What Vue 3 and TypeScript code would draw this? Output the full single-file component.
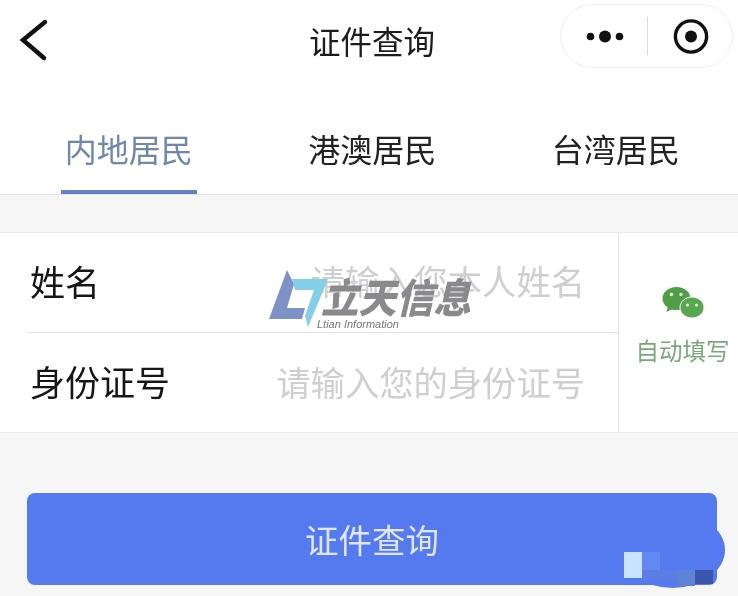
<script setup lang="ts">
const tabs: string[] = ['内地居民', '港澳居民', '台湾居民']
const fields = [
  { label: '姓名', placeholder: '请输入您本人姓名' },
  { label: '身份证号', placeholder: '请输入您的身份证号' },
]
</script>

<template>
  <div class="page">
    <header class="nav">
      <svg class="back" width="50" height="62" viewBox="0 0 50 62">
        <path d="M34 16 L12 34 L33 52" fill="none" stroke="#111" stroke-width="4.4" stroke-linecap="round" stroke-linejoin="miter" />
      </svg>
      <h1 class="title">证件查询</h1>
      <div class="capsule">
        <svg width="60" height="20" viewBox="0 0 60 20">
          <circle cx="9.500" cy="10.500" r="3.800" fill="#111" />
          <circle cx="24" cy="10.500" r="6" fill="#111" />
          <circle cx="38.500" cy="10.500" r="3.800" fill="#111" />
        </svg>
        <span class="capsule-line"></span>
        <svg width="38" height="38" viewBox="0 0 38 38">
          <circle cx="19" cy="19.500" r="15.600" fill="none" stroke="#111" stroke-width="3.400" />
          <circle cx="19" cy="19.500" r="6" fill="#111" />
        </svg>
      </div>
    </header>

    <nav class="tabs">
      <div v-for="(tab, i) in tabs" :key="tab" class="tab">
        <span class="tab-label" :class="{ active: i === 0 }">{{ tab }}</span>
      </div>
    </nav>

    <section class="form">
      <div class="fields">
        <div v-for="f in fields" :key="f.label" class="field">
          <span class="label">{{ f.label }}</span>
          <span class="placeholder">{{ f.placeholder }}</span>
        </div>
      </div>
      <div class="auto">
        <svg width="44" height="36" viewBox="0 0 44 36">
          <path d="M15.500 2 C7.500 2 1.500 7.200 1.500 13.500 C1.500 17.300 3.600 20.400 6.800 22.500 L5.300 27 L10.700 24.400 C12.300 24.900 13.900 25.100 15.500 25.100 C23.500 25.100 29.500 19.800 29.500 13.500 C29.500 7.200 23.500 2 15.500 2 Z" fill="#4f9f48" />
          <path d="M31 12 C24.500 12 19 16.500 19 22.500 C19 28.500 24.500 33 31 33 C37.500 33 43 28.500 43 22.500 C43 16.500 37.500 12 31 12 Z" fill="#5aa752" stroke="#fff" stroke-width="1" />
          <circle cx="10.500" cy="9.500" r="1.700" fill="#e8f3e6" />
          <circle cx="20" cy="9.500" r="1.700" fill="#e8f3e6" />
          <circle cx="26.500" cy="20" r="1.500" fill="#e8f3e6" />
          <circle cx="35.500" cy="20" r="1.500" fill="#e8f3e6" />
        </svg>
        <span class="auto-text">自动填写</span>
      </div>

      <div class="watermark">
        <svg class="mark" width="62" height="60" viewBox="0 0 62 60">
          <path d="M19 1 L1 50 L34 50 L37 39 L19 39 L26 15 Z" fill="#7e92c8" />
          <path d="M24 10 L60 10 L40 58 L37 47 L46 21 L27 21 Z" fill="#84cfe8" />
        </svg>
        <div class="wm-text">
          <span class="wm-cn">立天信息</span>
          <span class="wm-en">Ltian Information</span>
        </div>
      </div>
    </section>

    <div class="submit-wrap">
      <button class="submit" type="button">证件查询</button>
    </div>

    <div class="blur-patch">
      <span class="disc"></span>
      <span class="cell c5"></span>
      <span class="cell light"></span>
      <span class="cell c2"></span>
      <span class="cell c3"></span>
      <span class="cell c4"></span>
    </div>
  </div>
</template>

<style>
html, body { margin: 0; padding: 0; background: #f6f6f7; }
</style>

<style scoped>
.page {
  position: relative;
  width: 738px;
  height: 596px;
  overflow: hidden;
  background: #f6f6f7;
  font-family: "Noto Sans CJK SC", "Noto Sans", sans-serif;
  filter: blur(0.4px);
}
.nav {
  display: grid;
  grid-template-columns: 1fr auto 1fr;
  align-items: center;
  height: 85px;
  padding: 0 5px 11px 11px;
  box-sizing: border-box;
  background: #fff;
}
.back { display: block; }
.title {
  margin: 0;
  padding-top: 8px;
  font-size: 31.500px;
  line-height: 1;
  font-weight: 400;
  color: #1c1c1c;
}
.capsule {
  justify-self: end;
  align-self: start;
  display: flex;
  align-items: center;
  width: 173px;
  height: 64px;
  margin-top: 4px;
  box-sizing: border-box;
  border: 1px solid #efefef;
  border-radius: 32px;
  padding-left: 20px;
}
.capsule-line {
  width: 1px;
  height: 38px;
  margin: 0 24px 0 6px;
  background: #dcdcdc;
}
.tabs {
  display: grid;
  grid-template-columns: repeat(3, 243.500px);
  height: 110px;
  padding-left: 7px;
  box-sizing: border-box;
  background: #fff;
  border-bottom: 1px solid #e4e4e6;
}
.tab {
  display: flex;
  justify-content: center;
  align-items: flex-end;
}
.tab-label {
  height: 109px;
  width: 136px;
  box-sizing: border-box;
  padding-top: 44px;
  text-align: center;
  font-size: 32px;
  line-height: 38px;
  color: #222;
  white-space: nowrap;
}
.tab-label.active {
  color: #6d87ad;
  border-bottom: 4px solid #6581c2;
}
.form {
  position: relative;
  display: flex;
  height: 201px;
  margin-top: 37px;
  box-sizing: border-box;
  background: #fff;
  border-top: 1px solid #e8e8ea;
  border-bottom: 1px solid #e8e8ea;
}
.fields {
  width: 618px;
  padding-left: 28px;
  box-sizing: border-box;
  flex: none;
}
.field {
  display: flex;
  align-items: center;
  justify-content: space-between;
  height: 100px;
  box-sizing: border-box;
  padding: 0 33px 5px 2px;
}
.field:first-child {
  border-bottom: 1px solid #dfe3ec;
}
.label {
  font-size: 35px;
  color: #161616;
  white-space: nowrap;
}
.placeholder {
  font-size: 34.300px;
  color: #cfcfd2;
  white-space: nowrap;
}
.auto {
  flex: 1;
  border-left: 1px solid #e2e2e4;
  display: flex;
  flex-direction: column;
  align-items: center;
  justify-content: center;
  gap: 14px;
  padding: 0 0 16px 8px;
}
.auto-text {
  font-size: 23.500px;
  line-height: 30px;
  color: #79a878;
  white-space: nowrap;
}
.watermark {
  position: absolute;
  left: 268px;
  top: 36px;
  display: flex;
  align-items: flex-start;
}
.mark { flex: none; }
.wm-text {
  display: flex;
  flex-direction: column;
  margin-left: -9px;
  padding-top: 5px;
}
.wm-cn {
  font-size: 37.500px;
  line-height: 44px;
  font-weight: 900;
  font-style: italic;
  color: #8a8a8d;
  white-space: nowrap;
  transform: scaleY(1.08);
}
.wm-en {
  margin-top: 2px;
  margin-left: -4px;
  font-family: "Liberation Sans", sans-serif;
  font-size: 11px;
  line-height: 9px;
  font-style: italic;
  color: #77777b;
  white-space: nowrap;
}
.submit-wrap {
  padding: 60px 21px 0 27px;
}
.submit {
  display: block;
  width: 100%;
  height: 92px;
  padding: 0 0 2px;
  border: 0;
  border-radius: 8px;
  background: #5579ee;
  color: #dfe6f8;
  font-family: inherit;
  font-size: 33.500px;
}
.blur-patch {
  position: absolute;
  left: 600px;
  top: 510px;
  width: 138px;
  height: 86px;
  pointer-events: none;
}
.disc {
  position: absolute;
  left: 20px;
  top: 2px;
  width: 105px;
  height: 76px;
  border-radius: 50%;
  background: #5579ee;
}
.cell { position: absolute; }
.light {
  left: 24px;
  top: 42px;
  width: 18px;
  height: 26px;
  background: #c8e3fd;
}
.c2 {
  left: 42px;
  top: 42px;
  width: 18px;
  height: 18px;
  background: #6488f3;
}
.c5 {
  left: 42px;
  top: 60px;
  width: 35px;
  height: 10px;
  background: #5b7de4;
}
.c3 {
  left: 77px;
  top: 60px;
  width: 18px;
  height: 16px;
  background: #5f82d4;
}
.c4 {
  left: 95px;
  top: 60px;
  width: 18px;
  height: 14px;
  background: #3c56b0;
}
</style>
